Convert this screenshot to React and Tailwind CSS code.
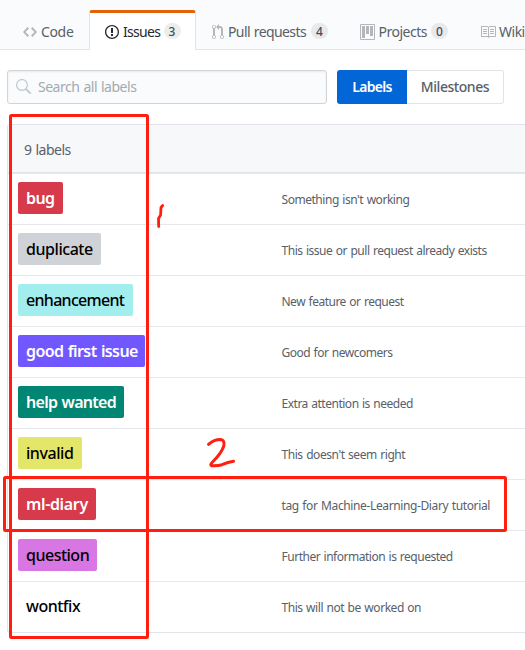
const icons = {
  code: {
    w: 14,
    d: "M9.5 3L8 4.5 11.5 8 8 11.5 9.5 13 14 8 9.5 3zm-5 0L0 8l4.5 5L6 11.5 2.5 8 6 4.5 4.5 3z",
  },
  issue: {
    w: 14,
    d: "M7 2.3c3.14 0 5.7 2.56 5.7 5.7s-2.56 5.7-5.7 5.7A5.71 5.71 0 011.3 8c0-3.14 2.56-5.7 5.7-5.7zM7 1C3.14 1 0 4.14 0 8s3.14 7 7 7 7-3.14 7-7-3.14-7-7-7zm1 3H6v5h2V4zm0 6H6v2h2v-2z",
  },
  pull: {
    w: 12,
    d: "M11 11.28V5c-.03-.78-.34-1.47-.94-2.06C9.46 2.35 8.78 2.03 8 2H7V0L4 3l3 3V4h1c.27.02.48.11.69.31.21.2.3.42.31.69v6.28A1.993 1.993 0 0010 15a1.993 1.993 0 001-3.72zm-1 2.92c-.66 0-1.2-.55-1.2-1.2 0-.65.55-1.2 1.2-1.2.65 0 1.2.55 1.2 1.2 0 .65-.55 1.2-1.2 1.2zM4 3c0-1.11-.89-2-2-2a1.993 1.993 0 00-1 3.72v6.56A1.993 1.993 0 002 15a1.993 1.993 0 001-3.72V4.72c.59-.34 1-.98 1-1.72zm-.8 10c0 .66-.55 1.2-1.2 1.2-.65 0-1.2-.55-1.2-1.2 0-.65.55-1.2 1.2-1.2.65 0 1.2.55 1.2 1.2zM2 4.2C1.34 4.2.8 3.65.8 3c0-.65.55-1.2 1.2-1.2.65 0 1.2.55 1.2 1.2 0 .65-.55 1.2-1.2 1.2z",
  },
  project: {
    w: 15,
    d: "M10 12h3V2h-3v10zm-4-2h3V2H6v8zm-4 4h3V2H2v12zm-1 1h13V1H1v14zM14 0H1a1 1 0 00-1 1v14a1 1 0 001 1h13a1 1 0 001-1V1a1 1 0 00-1-1z",
  },
  book: {
    w: 16,
    d: "M3 5h4v1H3V5zm0 3h4V7H3v1zm0 2h4V9H3v1zm11-5h-4v1h4V5zm0 2h-4v1h4V7zm0 2h-4v1h4V9zm2-6v9c0 .55-.45 1-1 1H9.5l-1 1-1-1H2c-.55 0-1-.45-1-1V3c0-.55.45-1 1-1h5.5l1 1 1-1H15c.55 0 1 .45 1 1zm-8 .5L7.5 3H2v9h6V3.5zm7-.5H9.5l-.5.5V12h6V3z",
  },
  search: {
    w: 16,
    d: "M15.7 13.3l-3.81-3.83A5.93 5.93 0 0 0 13 6c0-3.31-2.69-6-6-6S1 2.69 1 6s2.69 6 6 6c1.3 0 2.48-.41 3.47-1.11l3.83 3.81c.19.2.45.3.7.3.25 0 .52-.09.7-.3a.996.996 0 0 0 0-1.41v.01zM7 10.7c-2.59 0-4.7-2.11-4.7-4.7 0-2.59 2.11-4.7 4.7-4.7 2.59 0 4.7 2.11 4.7 4.7 0 2.59-2.11 4.7-4.7 4.7z",
  },
};

function Icon({ name, className }) {
  const { w, d } = icons[name];
  return (
    <svg width={w} height={16} viewBox={`0 0 ${w} 16`} fill="currentColor" fillRule="evenodd" className={`shrink-0 ${className}`}>
      <path d={d} />
    </svg>
  );
}

function Tab({ icon, text, count, active, className, iconClass = "text-[#b3b7bb]", textClass }) {
  return (
    <a
      className={`flex shrink-0 items-center whitespace-nowrap ${
        active
          ? "h-10 rounded-t-[3px] border-x border-t-[3px] border-x-[#e1e4e8] border-t-[#e36209] bg-white text-[#24292e]"
          : "h-[39px] pt-1 text-[#586069]"
      } ${className}`}
    >
      <Icon name={icon} className={iconClass} />
      <span className={`-mt-px shrink-0 ${textClass}`}>{text}</span>
      {count !== undefined && (
        <span className="-mt-px flex h-4 w-[17px] shrink-0 items-center justify-center rounded-full bg-[#1b1f23]/8 text-[12px] font-medium text-[#444d56]">
          {count}
        </span>
      )}
    </a>
  );
}

const labels = [
  ["bug", "w-[45px] bg-[#d73a4a] font-semibold tracking-[-0.6px] text-white", "Something isn't working", "tracking-[-0.46px]"],
  ["duplicate", "w-[83px] bg-[#cfd3d7] font-medium tracking-[-0.45px] text-black", "This issue or pull request already exists", "tracking-[-0.48px]"],
  ["enhancement", "w-[115px] bg-[#a2eeef] font-medium tracking-[-0.7px] text-black", "New feature or request", "tracking-[-0.5px]"],
  ["good first issue", "w-[127px] bg-[#7057ff] font-semibold tracking-[-0.6px] text-white", "Good for newcomers", "tracking-[-0.5px]"],
  ["help wanted", "w-[106px] bg-[#008672] font-semibold tracking-[-0.7px] text-white", "Extra attention is needed", "tracking-[-0.49px]"],
  ["invalid", "w-[64px] bg-[#e4e669] font-medium tracking-[-0.45px] text-black", "This doesn't seem right", "tracking-[-0.44px]"],
  ["ml-diary", "w-[78px] bg-[#d73a4a] font-semibold tracking-[-0.35px] text-white", "tag for Machine-Learning-Diary tutorial", "tracking-[-0.38px]"],
  ["question", "w-[79px] bg-[#d876e3] font-medium tracking-[-0.5px] text-black", "Further information is requested", "tracking-[-0.49px]"],
  ["wontfix", "w-[71px] bg-white font-medium tracking-[-0.5px] text-black", "This will not be worked on", "tracking-[-0.45px]"],
];

export default function App() {
  return (
    <div className="relative h-[650px] w-[525px] overflow-hidden bg-white font-['Noto_Sans','Open_Sans',sans-serif] text-[14px] leading-[21px] text-[#586069] [word-spacing:0.8px]">
      <nav className="flex h-[50px] items-end border-b border-[#e1e4e8] bg-[#fafbfc]">
        <Tab icon="code" text="Code" className="ml-[23px] w-[66px]" textClass="ml-1 w-[33px] tracking-[-0.35px]" />
        <Tab
          icon="issue"
          text="Issues"
          count={3}
          active
          className="-mb-px w-[107px] pl-[15px]"
          iconClass="text-[#24292e]"
          textClass="ml-1 w-[40.5px] tracking-[-0.7px]"
        />
        <Tab icon="pull" text="Pull requests" count={4} className="ml-4 w-[148px]" textClass="ml-1 w-[83px] tracking-[-0.6px]" />
        <Tab icon="project" text="Projects" count={0} className="w-[120px]" textClass="ml-[3.5px] w-[52.5px] tracking-[-0.5px]" />
        <Tab icon="book" text="Wiki" textClass="ml-[3px] tracking-[-0.5px]" />
      </nav>

      <div className="mt-5 ml-[7px] flex h-[34px]">
        <div className="flex w-80 items-center rounded-[3px] border border-[#d1d5da] bg-[#fafbfc] pl-[7px] text-[#a3aab1] shadow-[inset_0_1px_2px_rgba(27,31,35,0.075)]">
          <Icon name="search" className="text-[#c6cbd1]" />
          <span className="-mt-px ml-[7px] tracking-[-0.48px]">Search all labels</span>
        </div>
        <div className="ml-2.5 flex font-semibold">
          <button className="w-[70px] rounded-l-[3px] bg-[#0366d6] pb-px tracking-[-0.7px] text-white">Labels</button>
          <button className="w-[97px] rounded-r-[3px] border border-l-0 border-[#e1e4e8] bg-white pb-px font-medium tracking-[-0.45px]">Milestones</button>
        </div>
      </div>

      <section className="mt-5 ml-[7px] w-[530px] rounded-[3px] border border-r-0 border-[#e1e4e8]">
        <header className="flex h-12 items-center border-b border-[#e1e4e8] bg-[#f6f8fa] pt-px pl-4 tracking-[-0.5px]">9 labels</header>
        {labels.map(([name, look, text, track]) => (
          <div key={name} className="flex h-[51px] items-start border-t border-[#e6e8eb] pt-2 pl-2.5">
            <div className="w-[263.5px]">
              <span className={`flex h-8 items-center rounded-[2px] pl-2 text-[16px] whitespace-nowrap ${look}`}>{name}</span>
            </div>
            <span className={`mt-[9px] text-[12px] leading-[18px] whitespace-nowrap ${track}`}>{text}</span>
          </div>
        ))}
      </section>

      <svg className="pointer-events-none absolute inset-0" width="525" height="650" fill="none" stroke="#ff1e10" strokeWidth="3" strokeLinecap="round" strokeLinejoin="round">
        <rect x="10.5" y="115.5" width="137" height="522" rx="1" />
        <rect x="4.5" y="477.5" width="501" height="53" rx="1" />
        <path strokeWidth="2.8" d="M162.7 205.5L161 207.5L160.6 215L158.5 218.5L158.7 226.5" />
        <path d="M208.5 444.3Q214 439.5 220.5 439.5Q225 440 223.8 446Q221.5 453 213.5 461Q209.5 465 211.5 465.7Q218 466 222 464.7Q228 462 233.5 461.3" />
      </svg>
    </div>
  );
}
